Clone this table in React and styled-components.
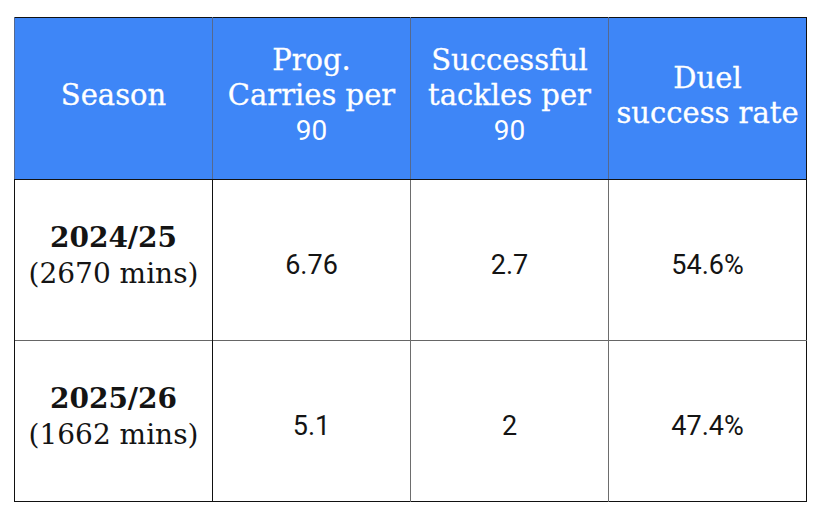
import React from "react"
import styled, { createGlobalStyle } from "styled-components"

const GlobalStyle = createGlobalStyle`
  html, body {
    margin: 0;
    padding: 0;
    background: #fff;
  }
`

const Page = styled.div`
  padding: 17px 0 0 14px;
`

const Table = styled.table`
  border-collapse: collapse;
  table-layout: fixed;
  width: 792px;
  border: 1.5px solid #111;
  font-family: "DejaVu Serif", serif;
`

const Col = styled.col`
  width: 198px;
`

const HeadCell = styled.th`
  height: 162px;
  padding: 0 2px 6px;
  box-sizing: border-box;
  background: #3e86f7;
  color: #fff;
  font-weight: normal;
  font-size: 29px;
  line-height: 35px;
  text-align: center;
  vertical-align: middle;
  -webkit-text-stroke: 0.3px #fff;
  border-left: 1px solid #55698f;
  border-bottom: 1.5px solid #111;
`

const Row = styled.tr`
  & + & td {
    border-top: 1px solid #666;
  }
`

const Cell = styled.td`
  height: 161px;
  padding: ${(p) => (p.$season ? "0 0 9px" : "10px 0 0")};
  box-sizing: border-box;
  text-align: center;
  vertical-align: middle;
  color: #141414;
  border-left: 1px solid ${(p) => (p.$dark ? "#111" : "#6d6d6d")};
`

const SeasonName = styled.div`
  font-weight: bold;
  font-size: 28px;
  line-height: 36px;
`

const Minutes = styled.div`
  font-size: 28px;
  line-height: 36px;
`

const Value = styled.span`
  font-family: Roboto, "Liberation Sans", sans-serif;
  font-size: 27px;
`

const Num = styled.span`
  font-family: Roboto, "Liberation Sans", sans-serif;
  font-size: 28px;
  -webkit-text-stroke: 0;
`

const rows = [
  { season: "2024/25", mins: "(2670 mins)", carries: "6.76", tackles: "2.7", duels: "54.6%" },
  { season: "2025/26", mins: "(1662 mins)", carries: "5.1", tackles: "2", duels: "47.4%" },
]

export default function App() {
  return (
    <Page>
      <GlobalStyle />
      <Table>
        <colgroup>
          <Col />
          <Col />
          <Col />
          <Col />
        </colgroup>
        <thead>
          <tr>
            <HeadCell>Season</HeadCell>
            <HeadCell>
              Prog.
              <br />
              Carries per
              <br />
              <Num>90</Num>
            </HeadCell>
            <HeadCell>
              Successful
              <br />
              tackles per
              <br />
              <Num>90</Num>
            </HeadCell>
            <HeadCell>
              Duel
              <br />
              success rate
            </HeadCell>
          </tr>
        </thead>
        <tbody>
          {rows.map((r) => (
            <Row key={r.season}>
              <Cell $dark $season>
                <SeasonName>{r.season}</SeasonName>
                <Minutes>{r.mins}</Minutes>
              </Cell>
              <Cell $dark>
                <Value>{r.carries}</Value>
              </Cell>
              <Cell>
                <Value>{r.tackles}</Value>
              </Cell>
              <Cell>
                <Value>{r.duels}</Value>
              </Cell>
            </Row>
          ))}
        </tbody>
      </Table>
    </Page>
  )
}
